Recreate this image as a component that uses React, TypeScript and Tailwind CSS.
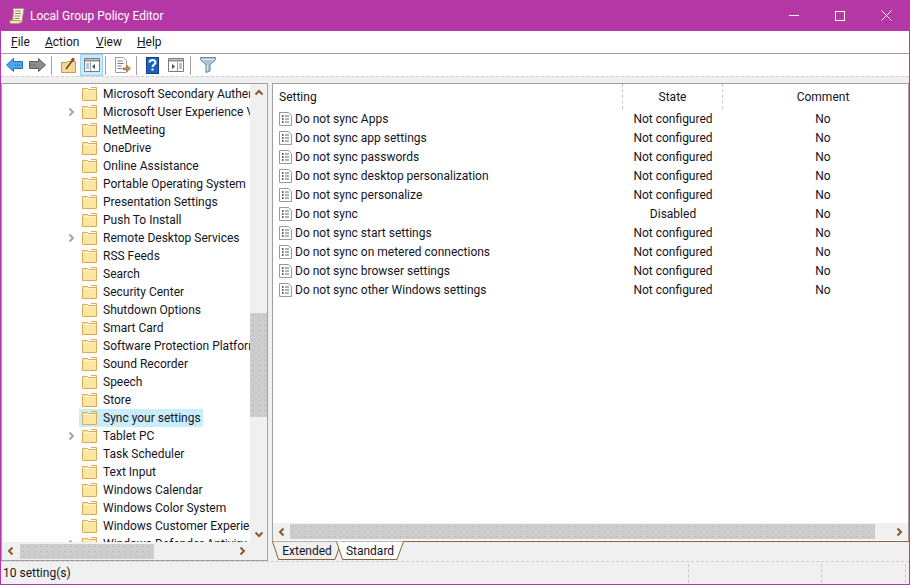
import React from "react";

const treeRows: [string, boolean][] = [
  ["Microsoft Secondary Authen", false],
  ["Microsoft User Experience V", true],
  ["NetMeeting", false],
  ["OneDrive", false],
  ["Online Assistance", false],
  ["Portable Operating System", false],
  ["Presentation Settings", false],
  ["Push To Install", false],
  ["Remote Desktop Services", true],
  ["RSS Feeds", false],
  ["Search", false],
  ["Security Center", false],
  ["Shutdown Options", false],
  ["Smart Card", false],
  ["Software Protection Platforn", false],
  ["Sound Recorder", false],
  ["Speech", false],
  ["Store", false],
  ["Sync your settings", false],
  ["Tablet PC", true],
  ["Task Scheduler", false],
  ["Text Input", false],
  ["Windows Calendar", false],
  ["Windows Color System", false],
  ["Windows Customer Experien", false],
  ["Windows Defender Antiviru", true],
];

const settings: [string, string][] = [
  ["Do not sync Apps", "Not configured"],
  ["Do not sync app settings", "Not configured"],
  ["Do not sync passwords", "Not configured"],
  ["Do not sync desktop personalization", "Not configured"],
  ["Do not sync personalize", "Not configured"],
  ["Do not sync", "Disabled"],
  ["Do not sync start settings", "Not configured"],
  ["Do not sync on metered connections", "Not configured"],
  ["Do not sync browser settings", "Not configured"],
  ["Do not sync other Windows settings", "Not configured"],
];

function Folder() {
  return (
    <svg width="15" height="14" viewBox="0 0 15 14" className="shrink-0">
      <path d="M0.500 2.500V1.500H5.500L6.500 2.500H14.500V13.500H0.500Z" fill="#fde6a2" stroke="#dcaa55" />
      <path d="M1.500 3.500H13.500" stroke="#fff6d6" />
      <path d="M9 0.500h5.500v2" fill="none" stroke="#dcaa55" />
    </svg>
  );
}

function Chev({ dir, color, size = 10 }: { dir: "l" | "r" | "u" | "d"; color: string; size?: number }) {
  const d = { l: "M6.500 1.500L3 5l3.500 3.500", r: "M3.500 1.500L7 5 3.500 8.500", u: "M1.500 6.500L5 3l3.500 3.500", d: "M1.500 3.500L5 7l3.500-3.500" }[dir];
  return (
    <svg width={size} height={size} viewBox="0 0 10 10" className="shrink-0">
      <path d={d} fill="none" stroke={color} strokeWidth="2" />
    </svg>
  );
}

function DocIcon() {
  return (
    <svg width="13" height="14" viewBox="0 0 13 14" className="shrink-0">
      <path d="M0.500 0.500H9.500L12.500 3.500V13.500H0.500Z" fill="#fff" stroke="#9a9a9a" />
      <path d="M3 4h1.500M3 7h1.500M3 10h1.500" stroke="#1f2a44" strokeWidth="1.400" />
      <path d="M6 4h4M6 7h4M6 10h4" stroke="#5c6478" />
    </svg>
  );
}

function Sep() {
  return <div className="w-px h-[19px] bg-[#a0a0a0] shrink-0" />;
}

const thumb =
  "bg-[#cdcdcd] bg-[radial-gradient(#bdbdbd_0.6px,transparent_0.7px)] bg-[length:6px_5px]";

function Tab({ label, width, active }: { label: string; width: number; active?: boolean }) {
  return (
    <div className="relative h-[19px] flex items-center justify-center shrink-0 -mr-[6px]" style={{ width }}>
      <svg width={width} height="19" viewBox={`0 0 ${width} 19`} className="absolute inset-0">
        <path
          d={`M0.500 0.500L6.500 18.500H${width - 7}L${width - 0.5} 0.500`}
          fill={active ? "#ffffff" : "#f0f0f0"}
          stroke="#8b6239"
        />
      </svg>
      <span className="relative">{label}</span>
    </div>
  );
}

export default function App() {
  return (
    <div
      className="w-[910px] h-[585px] flex flex-col overflow-hidden bg-[#f0f0f0] border-x border-b border-[#b536a5] text-[12px] text-[#14141e]"
      style={{ fontFamily: 'Roboto, "Noto Sans", sans-serif' }}
    >
      {/* Title bar */}
      <div className="h-[31px] shrink-0 bg-[#b536a5] flex items-center text-white -mx-px">
        <svg width="16" height="18" viewBox="0 0 16 18" className="ml-[9px] mr-[5px] shrink-0">
          <path d="M4 1.500H15L13 13.500V15.500H3.500L4.500 4Z" fill="#fff9e2" stroke="#a89a70" />
          <path d="M1 13.500H11V16.500H1Z" fill="#f3e7b4" stroke="#a89a70" />
          <path d="M6 4h6M6 6.500h6M5.500 9h6M5.500 11.500h5" stroke="#8c7c50" />
        </svg>
        <span>Local Group Policy Editor</span>
        <div className="ml-auto flex items-center">
          <div className="w-[46px] flex justify-center">
            <div className="w-[10px] h-px bg-white" />
          </div>
          <div className="w-[46px] flex justify-center">
            <div className="w-[10px] h-[10px] border border-white" />
          </div>
          <div className="w-[46px] flex justify-center mr-[1px]">
            <svg width="11" height="11" viewBox="0 0 11 11">
              <path d="M0.500 0.500L10.500 10.500M10.500 0.500L0.500 10.500" stroke="#fff" />
            </svg>
          </div>
        </div>
      </div>

      {/* Menu */}
      <div className="h-[23px] shrink-0 bg-white border-b border-[#a0a0a0] flex items-center">
        <span className="ml-[10px] w-[34px]"><u>F</u>ile</span>
        <span className="w-[51px]"><u>A</u>ction</span>
        <span className="w-[41px]"><u>V</u>iew</span>
        <span><u>H</u>elp</span>
      </div>

      {/* Toolbar */}
      <div className="h-[22px] shrink-0 bg-white flex items-center">
        <svg width="17" height="14" viewBox="0 0 17 14" className="ml-[5px] shrink-0">
          <path d="M7.500 0.500V3.500H16.500V10.500H7.500V13.500L0.500 7Z" fill="#4aa6ec" stroke="#2a6cb0" />
          <path d="M9 7h6" stroke="#2a6cb0" strokeDasharray="1 1" />
        </svg>
        <svg width="17" height="14" viewBox="0 0 17 14" className="ml-[6px] shrink-0">
          <path d="M9.500 0.500V3.500H0.500V10.500H9.500V13.500L16.500 7Z" fill="#8c8c8c" stroke="#5c5c5c" />
          <path d="M2 7h6" stroke="#5c5c5c" strokeDasharray="1 1" />
        </svg>
        <div className="ml-[5px]"><Sep /></div>
        <svg width="15" height="16" viewBox="0 0 15 16" className="ml-[9px] shrink-0">
          <path d="M0.500 5.500H5.500L6.500 4.500H14.500V15.500H0.500Z" fill="#f6d795" stroke="#c79a50" />
          <path d="M5 12L11 4" stroke="#6d4620" strokeWidth="1.600" />
          <path d="M9.500 3L12 0.500 14 2.500 12 5Z" fill="#7c5630" />
        </svg>
        <div className="ml-[4px] w-[23px] h-[22px] bg-[#cce8ff] border border-[#99d1ff] flex items-center justify-center shrink-0">
          <svg width="16" height="14" viewBox="0 0 16 14">
            <path d="M0.500 0.500H15.500V13.500H0.500Z" fill="#fff" stroke="#7c7c7c" />
            <path d="M1 1.500h14v2H1Z" fill="#8c8c8c" />
            <path d="M2 6h3M2 8h3M2 10h3" stroke="#4a90d0" />
            <path d="M6.500 4v9" stroke="#a0a0a0" />
            <path d="M11 6v5L8 8.500Z" fill="#4c4c4c" />
          </svg>
        </div>
        <div className="ml-[2px]"><Sep /></div>
        <svg width="17" height="16" viewBox="0 0 17 16" className="ml-[8px] shrink-0">
          <path d="M1.500 0.500H9.500L12.500 3.500V15.500H1.500Z" fill="#fff" stroke="#9c9c9c" />
          <path d="M3.500 4h5M3.500 6.500h6M3.500 9h4M3.500 11.500h4" stroke="#7a7a7a" />
          <path d="M9 11h4V8.500L16.500 11.500 13 14.500V12.500H9Z" fill="#e0a040" stroke="#8a5a20" strokeWidth="0.700" />
        </svg>
        <div className="ml-[5px]"><Sep /></div>
        <svg width="13" height="17" viewBox="0 0 13 17" className="ml-[9px] shrink-0">
          <rect width="13" height="17" fill="#123f86" />
          <rect x="1" y="1" width="11" height="15" fill="#1a62bc" />
          <path d="M3.500 5.500C3.500 2 9.500 2 9.500 5.500C9.500 7.500 6.500 7.500 6.500 10" fill="none" stroke="#fff" strokeWidth="2" />
          <rect x="5.500" y="11.500" width="2" height="2" fill="#fff" />
        </svg>
        <svg width="16" height="14" viewBox="0 0 16 14" className="ml-[9px] shrink-0">
          <path d="M0.500 0.500H15.500V13.500H0.500Z" fill="#fff" stroke="#7c7c7c" />
          <path d="M1 1.500h14v2H1Z" fill="#8c8c8c" />
          <path d="M11 6h3M11 8h3M11 10h3" stroke="#4a90d0" />
          <path d="M9.500 4v9" stroke="#a0a0a0" />
          <path d="M4 6v5l3-2.500Z" fill="#4c4c4c" />
        </svg>
        <div className="ml-[6px]"><Sep /></div>
        <svg width="16" height="16" viewBox="0 0 16 16" className="ml-[9px] shrink-0">
          <path d="M0.500 0.500H15.500V2.500L10 8V14L6 15.500V8L0.500 2.500Z" fill="#a8c4d4" stroke="#6f8796" />
          <path d="M2 2.500H14" stroke="#e6f0f5" />
          <path d="M7.500 8V14" stroke="#dfe9ee" />
        </svg>
      </div>

      {/* Strip */}
      <div className="h-[7px] shrink-0 border-t border-dashed border-[#d0d0d0]" />

      {/* Panes */}
      <div className="h-[478px] shrink-0 flex gap-[4px]">
        {/* Tree */}
        <div className="w-[267px] shrink-0 border border-[#a0a0a0] bg-white flex flex-col">
          <div className="h-[458px] shrink-0 flex overflow-hidden">
            <div className="w-[248px] shrink-0 overflow-hidden pt-px">
              {treeRows.map(([name, chev]) => {
                const sel = name === "Sync your settings";
                return (
                  <div key={name} className="h-[18px] flex items-center whitespace-nowrap">
                    <div className="w-[77px] shrink-0 flex justify-end pr-[3px]">
                      {chev && <Chev dir="r" color="#a6a6a6" />}
                    </div>
                    <div className={`flex items-center h-[18px] pl-[3px] pr-[2px] gap-[6px] ${sel ? "bg-[#c9edfb]" : ""}`}>
                      <Folder />
                      <span>{name}</span>
                    </div>
                  </div>
                );
              })}
            </div>
            <div className="w-[17px] shrink-0 bg-[#f0f0f0] flex flex-col">
              <div className="h-[17px] flex items-center justify-center"><Chev dir="u" color="#8b5a2b" /></div>
              <div className="h-[212px] shrink-0" />
              <div className={`h-[104px] shrink-0 ${thumb}`} />
              <div className="flex-1" />
              <div className="h-[17px] flex items-center justify-center"><Chev dir="d" color="#8b5a2b" /></div>
            </div>
          </div>
          <div className="flex-1 bg-[#f0f0f0] flex items-center">
            <div className="w-[18px] flex justify-center"><Chev dir="l" color="#8b5a2b" /></div>
            <div className={`w-[134px] h-[15px] ${thumb}`} />
            <div className="flex-1" />
            <div className="w-[17px] mr-[17px] flex justify-center"><Chev dir="r" color="#8b5a2b" /></div>
          </div>
        </div>

        {/* Right */}
        <div className="flex-1 min-w-0 flex flex-col">
          <div className="h-[459px] shrink-0 border border-[#a0a0a0] border-b-[#8b6239] bg-white flex flex-col overflow-hidden">
            <div className="h-[25px] shrink-0 flex items-center">
              <div className="w-[350px] shrink-0 pl-[6px] h-full flex items-center border-r border-dashed border-[#c8c8c8]">Setting</div>
              <div className="w-[100px] shrink-0 h-full flex items-center justify-center border-r border-dashed border-[#c8c8c8]">State</div>
              <div className="w-[200px] shrink-0 text-center">Comment</div>
            </div>
            <div className="flex-1">
              {settings.map(([name, state]) => (
                <div key={name} className="h-[19px] flex items-center whitespace-nowrap">
                  <div className="w-[350px] shrink-0 pl-[6px] flex items-center gap-[3px]">
                    <DocIcon />
                    <span>{name}</span>
                  </div>
                  <div className="w-[100px] shrink-0 text-center">{state}</div>
                  <div className="w-[200px] shrink-0 text-center">No</div>
                </div>
              ))}
            </div>
            <div className="h-[17px] shrink-0 mb-px bg-[#f0f0f0] flex items-center">
              <div className="w-[17px] flex justify-center"><Chev dir="l" color="#8b5a2b" /></div>
              <div className={`w-[585px] h-[15px] ${thumb}`} />
              <div className="flex-1 flex justify-end pr-[4px]"><Chev dir="r" color="#8b5a2b" /></div>
            </div>
          </div>
          <div className="flex -mt-px">
            <Tab label="Extended" width={70} />
            <Tab label="Standard" width={68} active />
          </div>
        </div>
      </div>

      {/* Status */}
      <div className="flex-1 border-t border-dashed border-[#d0d0d0] flex items-center">
        <div className="w-[687px] pl-[2px]">10 setting(s)</div>
        <div className="w-[133px] h-[19px] border-l border-dashed border-[#c8c8c8]" />
        <div className="w-[85px] h-[19px] border-x border-dashed border-[#c8c8c8]" />
      </div>
    </div>
  );
}
